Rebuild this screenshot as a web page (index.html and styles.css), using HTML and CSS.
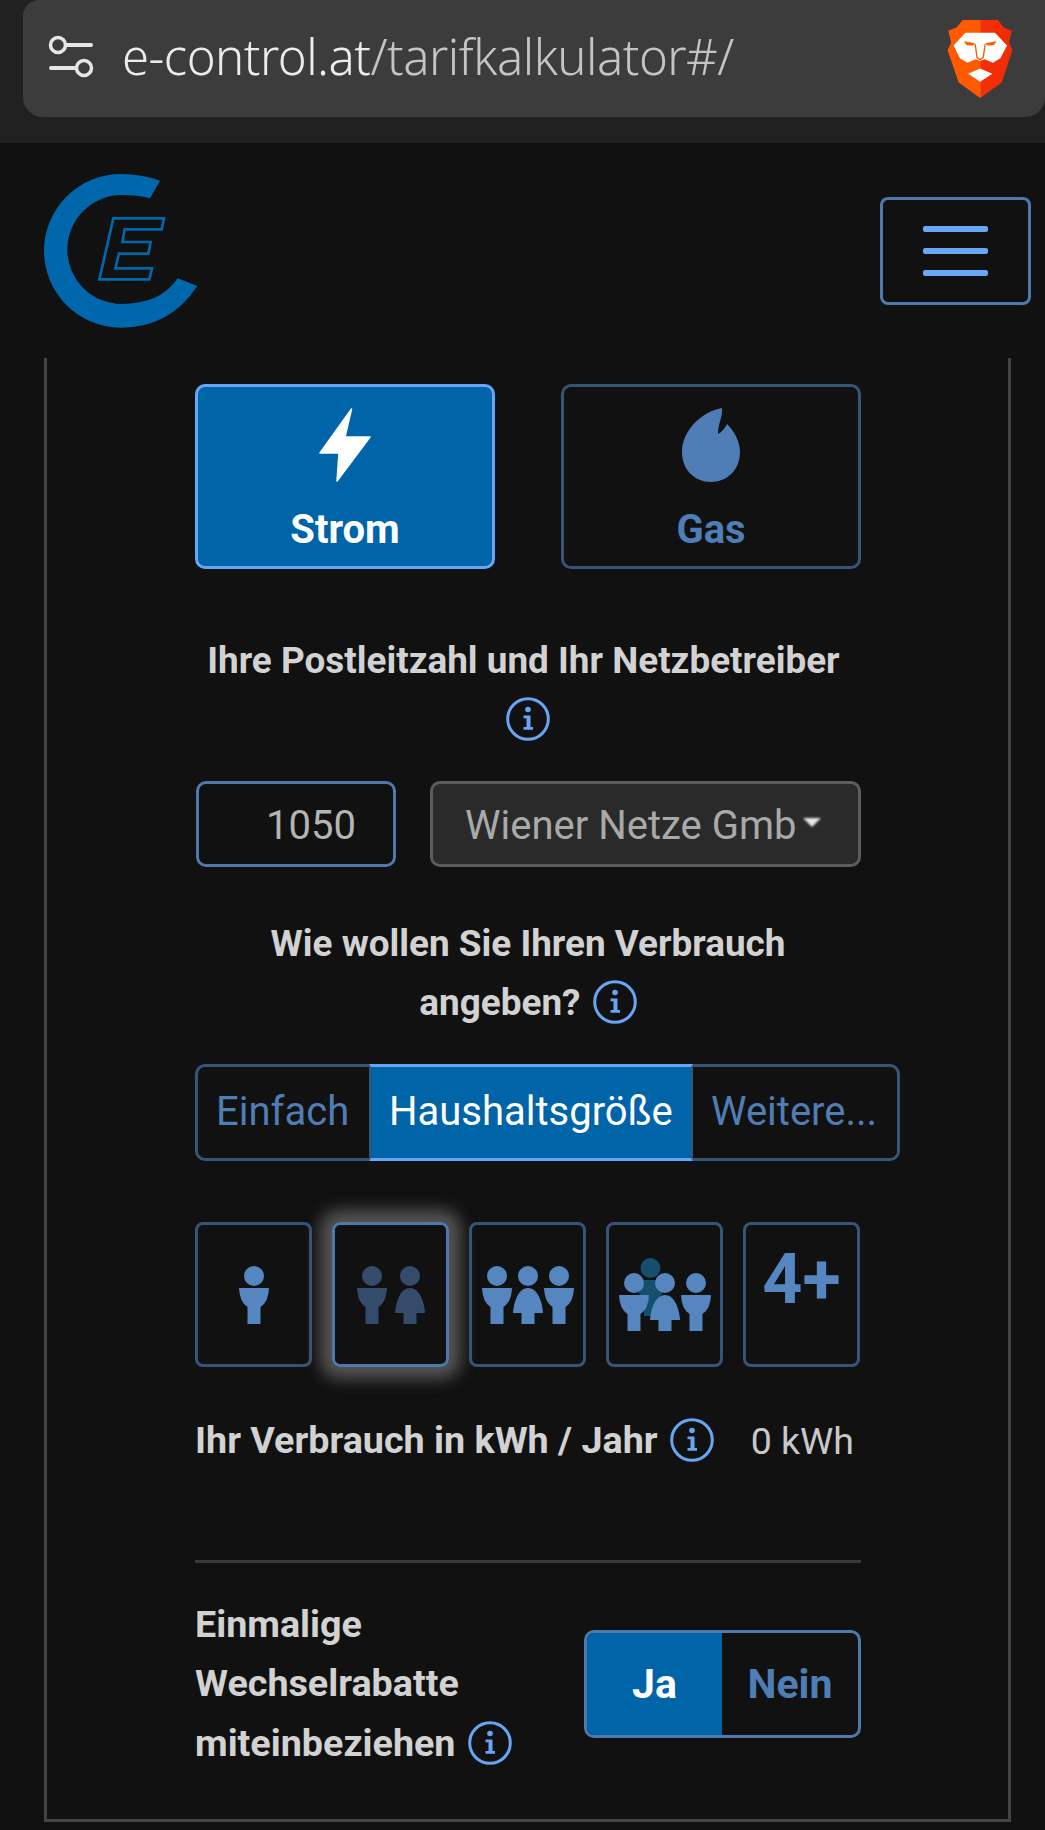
FILE: index.html
```html
<!DOCTYPE html>
<html lang="de">
<head>
  <meta charset="UTF-8">
  <title>Tarifkalkulator</title>
  <link rel="stylesheet" href="styles.css">
</head>
<body>
  <svg class="defs" width="0" height="0">
    <symbol id="man" viewBox="0 0 30 58">
      <ellipse cx="15" cy="10" rx="10" ry="10"/>
      <path d="M0 22H30Q29.500 36 21.500 41V58H8.500V41Q0.500 36 0 22Z"/>
    </symbol>
    <symbol id="woman" viewBox="0 0 30 58">
      <ellipse cx="15" cy="10" rx="10" ry="10"/>
      <path d="M15 22C24 22 29 34 30 47H21.500V58H8.500V47H0C1 34 6 22 15 22Z"/>
    </symbol>
    <symbol id="info" viewBox="0 0 44 44">
      <circle cx="22" cy="22" r="20.300" fill="none" stroke="currentColor" stroke-width="3"/>
      <circle cx="22" cy="12.500" r="2.800"/>
      <path d="M17.500 18.500H24.500V30H27V32.800H17.500V30H20.500V21.300H17.500Z"/>
    </symbol>
  </svg>

  <div class="browser-bar">
    <div class="address">
      <svg class="tune" width="46" height="44" viewBox="0 0 46 44">
        <circle cx="10" cy="10" r="7.500" fill="none" stroke="#e6e6e6" stroke-width="3.500"/>
        <path d="M18 10H43M3 33H27" stroke="#e6e6e6" stroke-width="4" stroke-linecap="round"/>
        <circle cx="36" cy="33" r="7.500" fill="none" stroke="#e6e6e6" stroke-width="3.500"/>
      </svg>
      <span class="url"><span class="host">e-control.at</span>/tarifkalkulator#/</span>
      <svg class="brave" width="66" height="78" viewBox="55 28 193 232">
        <defs>
          <linearGradient id="brave-fill" x1="0" x2="1" y1="0" y2="0">
            <stop offset="0" stop-color="#ff5a00"/>
            <stop offset="0.5" stop-color="#ff5a00"/>
            <stop offset="0.52" stop-color="#f5300a"/>
            <stop offset="1" stop-color="#f02a00"/>
          </linearGradient>
        </defs>
        <path fill="url(#brave-fill)" d="M100 28H205L222 50L246 60L238 95L248 118L216 214L152 260L88 214L55 118L66 95L57 60L82 50Z"/>
        <path fill="#fff" d="M108 66H196L232 104L212 142L190 155L165 145L152 150L139 145L114 155L92 142L73 104Z"/>
        <path fill="#fff" d="M152 172L188 188L152 212L116 188Z"/>
        <path fill="#ff5a00" d="M103 91L137 97L130 104L112 103ZM201 91L167 97L174 104L192 103Z"/>
        <path fill="none" stroke="#ff5a00" stroke-width="4" d="M137 100L143 140L152 146L161 140L167 100"/>
      </svg>
    </div>
  </div>

  <header class="site-header">
    <svg class="logo" width="154" height="154" viewBox="42 42 462 462">
      <path fill="#0067ad" d="M390 62Q335 42 273 42A231 230.500 0 0 0 273 503Q420 503 502 378L443 355Q392 432 275 432A163 163.500 0 0 1 275 105Q320 105 360 115Z"/>
      <path fill="none" stroke="#0067ad" stroke-width="8" d="M250 175H402L395 208H284L277 246H362L355 281H267L256 325H366L358 358H208Z"/>
    </svg>
    <button class="burger"><span></span><span></span><span></span></button>
  </header>

  <main class="panel">
    <div class="energy-row">
      <div class="energy active">
        <svg width="52" height="74" viewBox="0 0 52 74"><path fill="#fff" d="M32.500 1L1 45H20L18 73L51 29H26Z" stroke="#fff" stroke-width="1.500" stroke-linejoin="round"/></svg>
        <span>Strom</span>
      </div>
      <div class="energy">
        <svg width="58" height="74" viewBox="0 0 58 74"><path fill="#4f7db5" d="M40 0C41 8 36 16 36 26C40 24 43 20 45 16C52 23 58 33 58 44C58 62 45 74 29 74C13 74 0 62 0 44C0 24 18 4 40 0Z"/></svg>
        <span>Gas</span>
      </div>
    </div>

    <h2 class="label centered plz-label">Ihre Postleitzahl und Ihr Netzbetreiber&nbsp; <svg class="info"><use href="#info"/></svg></h2>

    <div class="plz-row">
      <div class="plz-input">1050</div>
      <div class="netz-select"><span class="netz-text">Wiener Netze Gmb</span><i class="caret"></i></div>
    </div>

    <h2 class="label centered usage-label">Wie wollen Sie Ihren Verbrauch angeben? <svg class="info"><use href="#info"/></svg></h2>

    <div class="tabs">
      <div class="tab first">Einfach</div>
      <div class="tab on">Haushaltsgröße</div>
      <div class="tab last">Weitere...</div>
    </div>

    <div class="sizes">
      <div class="size"><svg width="30" height="58"><use href="#man"/></svg></div>
      <div class="size picked"><svg width="68" height="58"><use href="#man" width="30" height="58"/><use href="#woman" x="38" width="30" height="58"/></svg></div>
      <div class="size"><svg width="92" height="58"><use href="#man" width="30" height="58"/><use href="#woman" x="31" width="30" height="58"/><use href="#man" x="62" width="30" height="58"/></svg></div>
      <div class="size"><svg width="92" height="73"><use class="back" href="#man" x="16.500" width="30" height="58"/><use href="#man" y="15" width="30" height="58"/><use href="#woman" x="31" y="15" width="30" height="58"/><use href="#man" x="62" y="15" width="30" height="58"/></svg></div>
      <div class="size plus">4+</div>
    </div>

    <div class="usage-row">
      <h2 class="label wide">Ihr Verbrauch in kWh / Jahr <svg class="info"><use href="#info"/></svg></h2>
      <span class="kwh">0 kWh</span>
    </div>

    <hr class="rule">

    <div class="rebate-row">
      <h2 class="label wide rebate-label">Einmalige Wechselrabatte miteinbeziehen <svg class="info"><use href="#info"/></svg></h2>
      <div class="yesno">
        <div class="yes">Ja</div>
        <div class="no">Nein</div>
      </div>
    </div>
  </main>
</body>
</html>
```

FILE: styles.css
```css
* {
  box-sizing: border-box;
}
html, body {
  margin: 0;
  background: #111;
}
body {
  height: 1830px;
  overflow: hidden;
  font-family: Roboto, "Liberation Sans", sans-serif;
  color: #d2d2d2;
}
.defs {
  position: absolute;
}

/* browser chrome */
.browser-bar {
  height: 143px;
  background: #212121;
  padding-left: 23px;
}
.address {
  height: 117px;
  background: #3c3c3c;
  border-radius: 0 0 20px 20px;
  border-top-left-radius: 16px;
  display: flex;
  align-items: center;
  padding: 0 32px 0 25px;
}
.tune {
  margin-top: -4px;
}
.url {
  margin: -6px 0 0 28px;
  font-family: "Noto Sans", sans-serif;
  font-weight: 300;
  font-size: 49px;
  letter-spacing: -0.5px;
  color: #c4c4c4;
  white-space: nowrap;
}
.host {
  color: #ececec;
}
.brave {
  margin-left: auto;
}

/* site header */
.site-header {
  height: 215px;
  display: flex;
  align-items: center;
  justify-content: space-between;
  padding: 0 14px 0 44px;
}
.burger {
  width: 151px;
  height: 108px;
  background: none;
  border: 3px solid #4d79ac;
  border-radius: 8px;
  display: flex;
  flex-direction: column;
  align-items: center;
  justify-content: center;
  gap: 16px;
  padding: 0;
}
.burger span {
  width: 65px;
  height: 6px;
  border-radius: 2px;
  background: #6aa7f5;
}

/* form */
.panel {
  width: 967px;
  height: 1464px;
  margin-left: 44px;
  border: 3px solid #444;
  border-top: 0;
  padding: 26px 147px 0 148px;
}
.energy-row {
  display: flex;
  justify-content: space-between;
}
.energy {
  width: 300px;
  height: 185px;
  border: 3px solid #375478;
  border-radius: 10px;
  display: flex;
  flex-direction: column;
  align-items: center;
  padding-top: 21px;
  color: #4f7db5;
  font-size: 40px;
  font-weight: 700;
}
.energy span {
  margin-top: 24px;
}
.energy.active {
  background: #0064a8;
  border-color: #66a6f5;
  color: #fff;
}
.label {
  margin: 0;
  font-size: 36.900px;
  font-weight: 700;
  line-height: 59.500px;
  color: #d2d2d2;
}
.label.wide {
  font-size: 37.700px;
}
.centered {
  text-align: center;
  line-height: 59px;
}
.info {
  width: 44px;
  height: 44px;
  vertical-align: -9px;
  color: #66a6f5;
  fill: #66a6f5;
  margin-left: 3px;
}
.plz-label {
  margin: 62px -10px 0;
}
.plz-label .info {
  margin-left: 0;
}
.plz-row {
  margin-top: 32px;
  display: flex;
  justify-content: space-between;
}
.plz-input {
  width: 200px;
  height: 86px;
  margin-left: 1px;
  border: 3px solid #4d79ac;
  border-radius: 10px;
  text-align: right;
  padding-right: 37px;
  font-size: 40px;
  line-height: 84px;
  color: #b4b4b4;
}
.netz-select {
  width: 431px;
  height: 86px;
  background: #2a2a2a;
  border: 3px solid #5c5c5c;
  border-radius: 10px;
  display: flex;
  align-items: center;
  padding: 3px 0 0 32px;
  font-size: 40px;
  color: #a9a9a9;
}
.netz-text {
  width: 332px;
  overflow: hidden;
  white-space: nowrap;
}
.caret {
  margin: -6px 0 0 6px;
  border: 9px solid transparent;
  border-top: 9px solid #e6e6e6;
  border-bottom: 0;
  filter: blur(1px);
}
.usage-label {
  margin: 47px 70px 0;
}
.tabs {
  margin-top: 32px;
  width: 705px;
  height: 97px;
  display: flex;
  font-size: 40px;
  line-height: 90px;
  color: #4f7db5;
}
.tab {
  border: 3px solid #375478;
  border-width: 3px 0;
  padding: 0 18px;
  white-space: nowrap;
}
.tab.first {
  border-left-width: 3px;
  border-radius: 10px 0 0 10px;
  flex: 0 0 174px;
}
.tab.last {
  border-right-width: 3px;
  border-radius: 0 10px 10px 0;
  flex: 1;
}
.tab.on {
  flex: 0 0 324px;
  background: #0064a8;
  color: #fff;
  border-color: #66a6f5 #375478;
  border-width: 3px 2px;
}
.sizes {
  margin-top: 61px;
  display: flex;
  gap: 20px;
}
.size {
  width: 117px;
  height: 145px;
  border: 3px solid #375478;
  border-radius: 8px;
  display: flex;
  align-items: center;
  justify-content: center;
  fill: #5586c0;
}
.size.picked {
  border-color: #4d79ac;
  box-shadow: 0 0 16px 12px #555;
  fill: #344b6b;
}
.back {
  fill: #14506e;
}
.plus {
  align-items: flex-start;
  font-size: 70px;
  font-weight: 700;
  line-height: 72px;
  padding-top: 18px;
  color: #5586c0;
}
.usage-row {
  margin-top: 44px;
  display: flex;
  align-items: center;
  justify-content: space-between;
}
.kwh {
  font-size: 37.500px;
  color: #c8c8c8;
  margin-right: 7px;
}
.rule {
  margin: 89px 0 0;
  height: 3px;
  border: 0;
  background: #3a3a3a;
}
.rebate-row {
  margin-top: 32px;
  display: flex;
  align-items: center;
  justify-content: space-between;
}
.rebate-label {
  width: 330px;
}
.yesno {
  width: 277px;
  height: 108px;
  border: 3px solid #4d79ac;
  border-radius: 10px;
  display: flex;
  overflow: hidden;
  font-size: 41px;
  font-weight: 700;
  line-height: 102px;
  text-align: center;
}
.yes {
  width: 135px;
  background: #0064a8;
  color: #fff;
}
.no {
  flex: 1;
  color: #4f7db5;
}
```
